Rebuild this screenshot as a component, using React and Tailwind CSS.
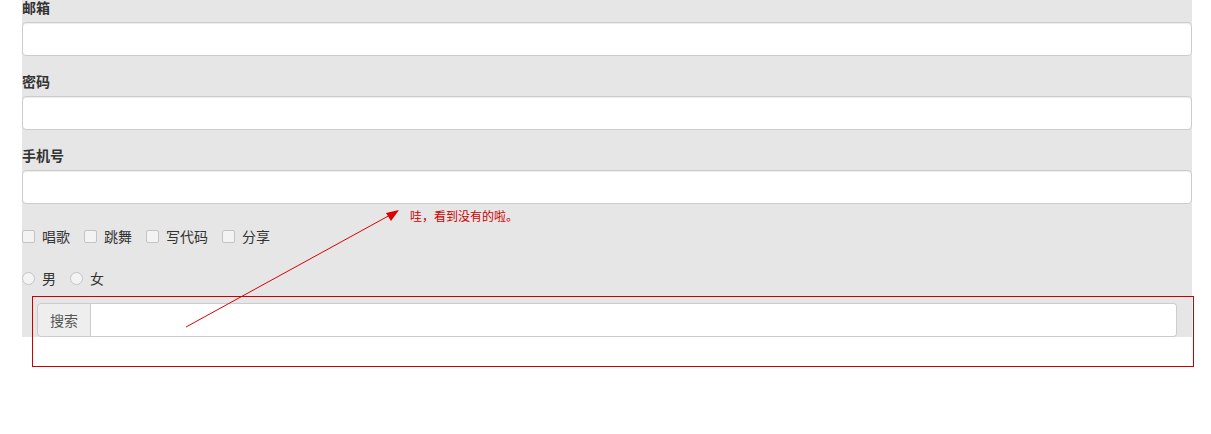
import React from 'react';

const font = { fontFamily: '"Noto Sans CJK SC", "Liberation Sans", sans-serif' };

function Field({ label }) {
  return (
    <div className="mb-[15px]">
      <label className="block h-[20px] leading-[20px] text-[14px] font-bold text-[#333] mb-[5px] whitespace-nowrap">{label}</label>
      <input className="block w-full h-[34px] bg-white border border-[#ccc] rounded-[4px] shadow-[inset_0_1px_1px_rgba(0,0,0,0.075)] outline-none" />
    </div>
  );
}

function Check({ label }) {
  return (
    <label className="flex items-center mr-[14px]">
      <span className="w-[13px] h-[13px] border border-[#c4c4c4] rounded-[2px] bg-[#f3f3f3]" />
      <span className="ml-[7px] text-[14px] text-[#333]">{label}</span>
    </label>
  );
}

function Radio({ label }) {
  return (
    <label className="flex items-center mr-[14px]">
      <span className="w-[13px] h-[13px] border border-[#c4c4c4] rounded-full bg-[#f3f3f3]" />
      <span className="ml-[7px] text-[14px] text-[#333]">{label}</span>
    </label>
  );
}

export default function App() {
  return (
    <div className="relative w-[1211px] h-[434px] bg-white overflow-hidden" style={font}>
      <div className="ml-[22px] w-[1170px] -mt-[3px] bg-[#e6e6e6]">
        <Field label="邮箱" />
        <Field label="密码" />
        <Field label="手机号" />

        {/* margin collapses with the field's mb-[15px] */}
        <div className="flex items-center h-[20px] mt-[22px]">
          <Check label="唱歌" />
          <Check label="跳舞" />
          <Check label="写代码" />
          <Check label="分享" />
        </div>

        <div className="flex items-center h-[20px] mt-[22px]">
          <Radio label="男" />
          <Radio label="女" />
        </div>

        <div className="flex h-[34px] mt-[15px] mx-[15px]">
          <span className="w-[54px] flex items-center justify-center bg-[#eee] border border-[#ccc] rounded-l-[4px] text-[14px] text-[#555]">搜索</span>
          <input className="flex-1 bg-white border border-l-0 border-[#ccc] rounded-r-[4px] outline-none" />
        </div>
      </div>

      <div className="absolute left-[32px] top-[296px] w-[1162px] h-[71px] border border-[#c00] pointer-events-none" />

      <span className="absolute left-[410px] top-[207px] text-[12px] leading-[18px] text-[#c00]">哇，看到没有的啦。</span>

      <svg className="absolute left-0 top-0 pointer-events-none" width="1211" height="434">
        <line x1="186" y1="327" x2="392" y2="214" stroke="#d00" strokeWidth="1" />
        <polygon points="399,210 386,213 391,221" fill="#d00" />
      </svg>
    </div>
  );
}
